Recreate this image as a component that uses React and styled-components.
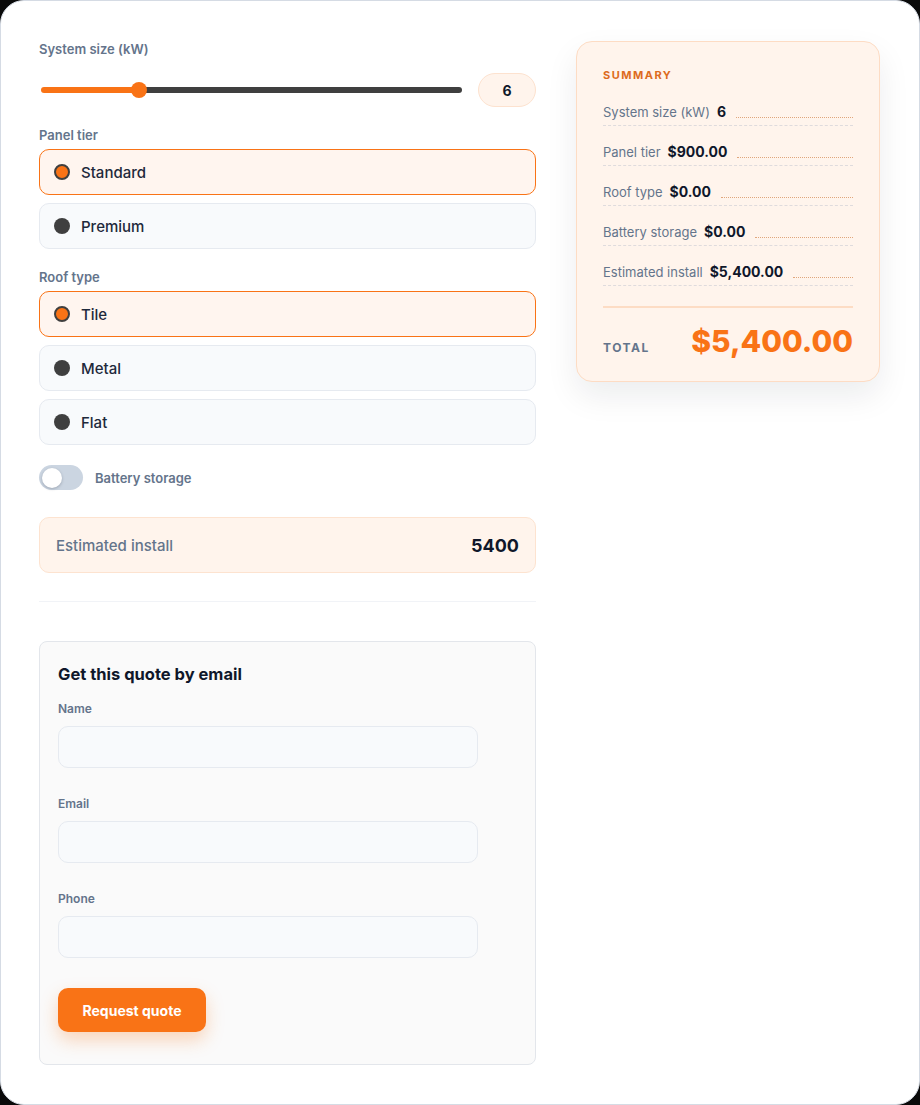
import React, { useState } from "react"
import styled, { createGlobalStyle } from "styled-components"

const GlobalStyle = createGlobalStyle`
  * { box-sizing: border-box; }
  body {
    margin: 0;
    background: #0a0a0a;
    font-family: Inter, "Noto Sans", "Liberation Sans", sans-serif;
    color: #0f172a;
  }
`

const panelTiers = [
  { id: "standard", label: "Standard" },
  { id: "premium", label: "Premium" },
]

const roofTypes = [
  { id: "tile", label: "Tile" },
  { id: "metal", label: "Metal" },
  { id: "flat", label: "Flat" },
]

const MIN_KW = 2
const MAX_KW = 20

const App = () => {
  const [size, setSize] = useState(6)
  const [tier, setTier] = useState("standard")
  const [roof, setRoof] = useState("tile")
  const [battery, setBattery] = useState(false)

  const install = size * 900
  const pct = ((size - MIN_KW) / (MAX_KW - MIN_KW)) * 100

  const rows = [
    { label: "System size (kW)", value: String(size) },
    { label: "Panel tier", value: "$900.00" },
    { label: "Roof type", value: "$0.00" },
    { label: "Battery storage", value: "$0.00" },
    { label: "Estimated install", value: "$" + install.toLocaleString("en-US") + ".00" },
  ]

  return (
    <>
      <GlobalStyle />
      <Frame>
        <Layout>
          <Main>
            <Field>
              <FieldLabel>System size (kW)</FieldLabel>
              <SliderRow>
                <Range
                  type="range"
                  min={MIN_KW}
                  max={MAX_KW}
                  value={size}
                  onChange={(e) => setSize(Number(e.target.value))}
                  style={{
                    background: `linear-gradient(to right, #f97316 ${pct}%, #3f3f3f ${pct}%)`,
                  }}
                />
                <ValuePill>{size}</ValuePill>
              </SliderRow>
            </Field>

            <Field>
              <FieldLabel>Panel tier</FieldLabel>
              <Options>
                {panelTiers.map((t) => (
                  <Option key={t.id} $active={tier === t.id} onClick={() => setTier(t.id)}>
                    <Dot $active={tier === t.id} />
                    {t.label}
                  </Option>
                ))}
              </Options>
            </Field>

            <Field>
              <FieldLabel>Roof type</FieldLabel>
              <Options>
                {roofTypes.map((r) => (
                  <Option key={r.id} $active={roof === r.id} onClick={() => setRoof(r.id)}>
                    <Dot $active={roof === r.id} />
                    {r.label}
                  </Option>
                ))}
              </Options>
            </Field>

            <ToggleRow onClick={() => setBattery(!battery)}>
              <Toggle $on={battery}>
                <Knob $on={battery} />
              </Toggle>
              <ToggleText>Battery storage</ToggleText>
            </ToggleRow>

            <Estimate>
              <EstimateLabel>Estimated install</EstimateLabel>
              <EstimateValue>{install}</EstimateValue>
            </Estimate>

            <Divider />

            <QuoteCard>
              <QuoteTitle>Get this quote by email</QuoteTitle>
              <InputLabel>Name</InputLabel>
              <Input type="text" />
              <InputLabel>Email</InputLabel>
              <Input type="email" />
              <InputLabel>Phone</InputLabel>
              <Input type="tel" />
              <Button type="button">Request quote</Button>
            </QuoteCard>
          </Main>

          <Summary>
            <SummaryTitle>Summary</SummaryTitle>
            {rows.map((row) => (
              <SummaryRow key={row.label}>
                <RowLabel>{row.label}</RowLabel>
                <RowValue>{row.value}</RowValue>
                <Leader />
              </SummaryRow>
            ))}
            <TotalRule />
            <TotalRow>
              <TotalLabel>Total</TotalLabel>
              <TotalValue>${install.toLocaleString("en-US")}.00</TotalValue>
            </TotalRow>
          </Summary>
        </Layout>
      </Frame>
    </>
  )
}

const Frame = styled.div`
  min-height: 100vh;
  background: #ffffff;
  border: 1px solid #d5dbe4;
  border-radius: 24px;
  padding: 40px 39px 38px 38px;
`

const Layout = styled.div`
  display: grid;
  grid-template-columns: minmax(0, 1fr) 304px;
  gap: 40px;
  align-items: start;
`

const Main = styled.div`
  display: flex;
  flex-direction: column;
  gap: 20px;
`

const Field = styled.div`
  display: flex;
  flex-direction: column;
`

const FieldLabel = styled.div`
  font-size: 13px;
  font-weight: 600;
  line-height: 16px;
  color: #64748b;
  margin-bottom: 6px;
`

const SliderRow = styled.div`
  display: flex;
  align-items: center;
  gap: 16px;
  margin-top: 10px;
`

const Range = styled.input`
  flex: 1;
  margin: 0 0 0 2px;
  height: 6px;
  border-radius: 3px;
  appearance: none;
  -webkit-appearance: none;
  outline: none;

  &::-webkit-slider-thumb {
    -webkit-appearance: none;
    width: 16px;
    height: 16px;
    border-radius: 50%;
    background: #f97316;
    border: none;
    cursor: pointer;
  }
`

const ValuePill = styled.div`
  width: 58px;
  height: 34px;
  display: flex;
  align-items: center;
  justify-content: center;
  border-radius: 17px;
  background: #fff4ec;
  border: 1px solid #fde2cf;
  font-size: 14px;
  font-weight: 700;
  color: #0f172a;
`

const Options = styled.div`
  display: flex;
  flex-direction: column;
  gap: 8px;
`

const Option = styled.div`
  height: 46px;
  display: flex;
  align-items: center;
  gap: 11px;
  padding: 0 14px;
  border-radius: 10px;
  border: 1px solid ${(p) => (p.$active ? "#f97316" : "#e6eaf0")};
  background: ${(p) => (p.$active ? "#fff5ef" : "#f8fafc")};
  font-size: 15px;
  font-weight: 500;
  color: #1e293b;
  cursor: pointer;
`

const Dot = styled.span`
  width: 16px;
  height: 16px;
  border-radius: 50%;
  flex-shrink: 0;
  background: ${(p) => (p.$active ? "#f97316" : "#3f3f3f")};
  border: ${(p) => (p.$active ? "2.5px solid #3f3f3f" : "none")};
`

const ToggleRow = styled.div`
  display: flex;
  align-items: center;
  gap: 12px;
  margin-bottom: 7px;
  cursor: pointer;
`

const Toggle = styled.div`
  width: 44px;
  height: 25px;
  border-radius: 13px;
  background: ${(p) => (p.$on ? "#f97316" : "#cbd5e1")};
  padding: 2.5px 3px;
  display: flex;
  justify-content: ${(p) => (p.$on ? "flex-end" : "flex-start")};
`

const Knob = styled.span`
  width: 20px;
  height: 20px;
  border-radius: 50%;
  background: #ffffff;
  box-shadow: 0 1px 3px rgba(15, 23, 42, 0.25);
`

const ToggleText = styled.span`
  font-size: 13px;
  font-weight: 600;
  color: #64748b;
`

const Estimate = styled.div`
  height: 56px;
  display: flex;
  align-items: center;
  justify-content: space-between;
  padding: 0 16px;
  border-radius: 10px;
  background: #fff4ec;
  border: 1px solid #fde3d0;
  margin-bottom: 8px;
`

const EstimateLabel = styled.span`
  font-size: 15px;
  font-weight: 500;
  color: #64748b;
`

const EstimateValue = styled.span`
  font-size: 18px;
  font-weight: 700;
  color: #0f172a;
`

const Divider = styled.hr`
  margin: 0 0 19px;
  border: none;
  border-top: 1px solid #f1f3f7;
`

const QuoteCard = styled.form`
  display: flex;
  flex-direction: column;
  align-items: flex-start;
  padding: 20px 18px 32px;
  background: #fafafa;
  border: 1px solid #e3e6eb;
  border-radius: 8px;
`

const QuoteTitle = styled.h2`
  margin: 0 0 15px;
  font-size: 16.5px;
  font-weight: 700;
  line-height: 24px;
  color: #0f172a;
`

const InputLabel = styled.label`
  font-size: 12px;
  font-weight: 600;
  line-height: 16px;
  color: #64748b;
  margin-bottom: 9px;
`

const Input = styled.input`
  width: 420px;
  height: 42px;
  margin: 0 0 28px;
  padding: 0 12px;
  border-radius: 10px;
  border: 1px solid #e6eaf0;
  background: #f8fafc;
  font-family: inherit;
  font-size: 14px;
  outline: none;
`

const Button = styled.button`
  margin-top: 2px;
  width: 148px;
  height: 44px;
  border: none;
  border-radius: 10px;
  background: #f97316;
  color: #ffffff;
  font-family: inherit;
  font-size: 14px;
  font-weight: 700;
  box-shadow: 0 8px 18px rgba(249, 115, 22, 0.28);
  cursor: pointer;
`

const Summary = styled.aside`
  padding: 25px 26px 20px 26px;
  background: #fff4ec;
  border: 1px solid #fddcc4;
  border-radius: 16px;
  box-shadow: 0 14px 32px rgba(15, 23, 42, 0.08);
`

const SummaryTitle = styled.div`
  font-size: 11px;
  font-weight: 700;
  line-height: 16px;
  letter-spacing: 1.5px;
  text-transform: uppercase;
  color: #dd6b20;
  margin-bottom: 3px;
`

const SummaryRow = styled.div`
  display: flex;
  align-items: center;
  gap: 7px;
  padding: 16px 0 3px;
  line-height: 20px;
  border-bottom: 1px dashed rgba(148, 163, 184, 0.3);
`

const RowLabel = styled.span`
  font-size: 13px;
  color: #64748b;
`

const RowValue = styled.span`
  font-size: 14px;
  font-weight: 700;
  color: #0f172a;
`

const Leader = styled.span`
  flex: 1;
  align-self: flex-end;
  margin: 0 0 4px 3px;
  border-bottom: 1px dotted #e0a67c;
`

const TotalRule = styled.div`
  height: 2px;
  background: #fddcc4;
  margin-top: 20px;
`

const TotalRow = styled.div`
  display: flex;
  align-items: center;
  justify-content: space-between;
  margin-top: 13px;
  height: 40px;
`

const TotalLabel = styled.span`
  font-size: 12px;
  font-weight: 700;
  letter-spacing: 1.5px;
  text-transform: uppercase;
  color: #64748b;
  margin-top: 12px;
`

const TotalValue = styled.span`
  font-size: 30px;
  font-weight: 800;
  color: #f97316;
`

export default App
